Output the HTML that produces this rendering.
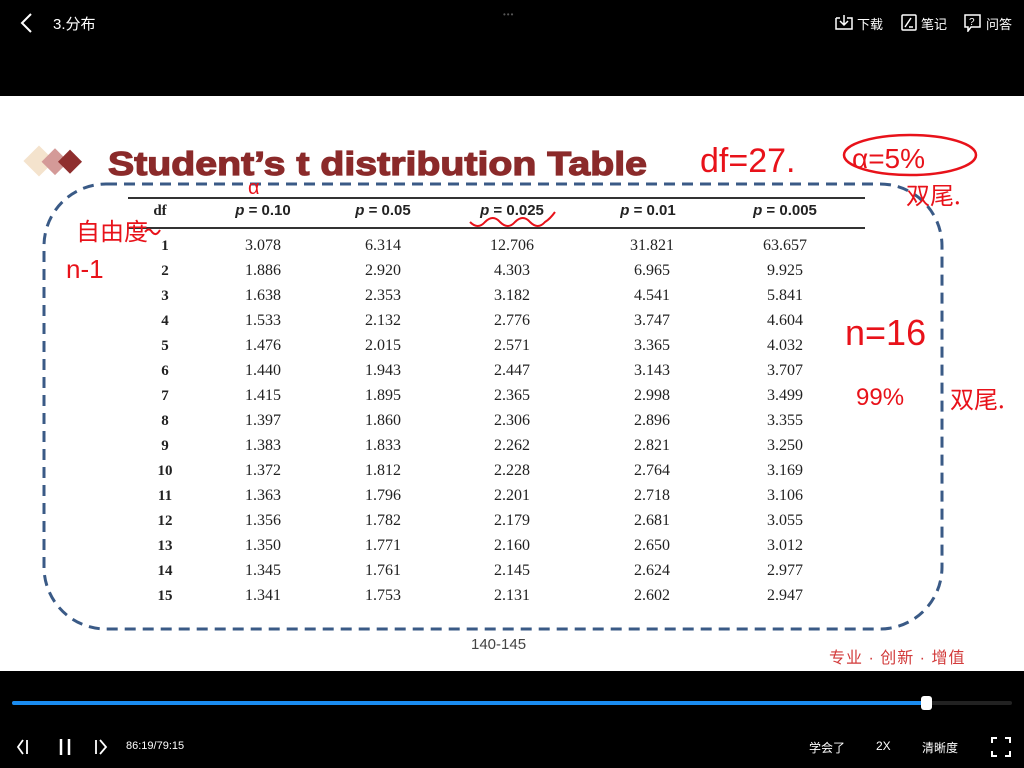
<!DOCTYPE html>
<html><head><meta charset="utf-8"><style>
body{margin:0;width:1024px;height:768px;background:#000;position:relative;overflow:hidden;font-family:"Liberation Sans","Noto Sans CJK SC",sans-serif}
.abs{position:absolute}
.w{color:#fff}
#slide{position:absolute;left:0;top:96px;width:1024px;height:575px;background:#fff}
.num{position:absolute;font-family:"Liberation Serif",serif;font-size:16px;color:#222;text-align:center;width:80px}
.hd{position:absolute;font-family:"Liberation Sans",sans-serif;font-weight:bold;font-size:15px;color:#222;text-align:center;width:100px;top:202px}
.df{position:absolute;font-family:"Liberation Serif",serif;font-weight:bold;font-size:15px;color:#222;width:30px;text-align:center;left:150px}
.red{position:absolute;color:#e8121a;font-family:"Noto Sans CJK SC",sans-serif}
</style></head><body>
<svg class="abs" style="left:18px;top:12px" width="16" height="22"><path d="M13 2 L4 11 L13 20" stroke="#fff" stroke-width="2" fill="none"/></svg>
<div class="abs w" style="left:53px;top:13px;font-size:15px">3.分布</div>
<div class="abs" style="left:503px;top:10px;color:#555;font-size:8px;letter-spacing:1px">•••</div>
<svg class="abs" style="left:835px;top:14px" width="18" height="16"><path d="M1 4 H5 M12 4 H17 V15 H1 V4 M9 1 V11 M5 7 L9 11 L13 7" stroke="#fff" stroke-width="1.5" fill="none"/></svg>
<div class="abs w" style="left:857px;top:14px;font-size:13px">下载</div>
<svg class="abs" style="left:901px;top:14px" width="16" height="17"><rect x="1" y="1" width="14" height="15" rx="1" stroke="#fff" stroke-width="1.5" fill="none"/><path d="M4 13 L10 4 M8 13 H12" stroke="#fff" stroke-width="1.5"/></svg>
<div class="abs w" style="left:921px;top:14px;font-size:13px">笔记</div>
<svg class="abs" style="left:964px;top:14px" width="17" height="18"><path d="M1 1 H16 V13 H7 L4 17 V13 H1 Z" stroke="#fff" stroke-width="1.5" fill="none"/><text x="5" y="11" fill="#fff" font-size="10" font-family="Liberation Sans">?</text></svg>
<div class="abs w" style="left:986px;top:14px;font-size:13px">问答</div>

<div id="slide"></div>
<svg class="abs" style="left:0;top:96px" width="1024" height="575">
<g transform="translate(0,-96)">
<rect x="28" y="150" width="22" height="22" fill="#f3e0c8" transform="rotate(45 39 161)" opacity=".9"/>
<rect x="46" y="152" width="19" height="19" fill="#d49a98" transform="rotate(45 55 161)"/>
<rect x="62" y="153" width="17" height="17" fill="#8f2e2e" transform="rotate(45 70 161)"/>
<text x="108" y="175" font-family="Liberation Sans" font-weight="bold" font-size="33" fill="#8b2a2a" textLength="539" lengthAdjust="spacingAndGlyphs" stroke="#8b2a2a" stroke-width="1.2">Student’s t distribution Table</text>
<rect x="44" y="184" width="898" height="445" rx="62" fill="none" stroke="#3a5a86" stroke-width="3" stroke-dasharray="11 7"/>
<line x1="128" y1="198" x2="865" y2="198" stroke="#333" stroke-width="2"/>
<line x1="128" y1="228" x2="865" y2="228" stroke="#333" stroke-width="2"/>
<path d="M470 222 q8 8 15 0 q8 -8 15 0 q8 8 15 0 q8 -8 15 0 q8 8 15 0 q5 -3 10 -10" stroke="#e8121a" stroke-width="2" fill="none"/>
<path d="M145 232 q4 -5 7 0 q4 5 8 -2" stroke="#e8121a" stroke-width="2" fill="none"/>
<ellipse cx="910" cy="155" rx="66" ry="20" fill="none" stroke="#e8121a" stroke-width="2.5"/>
<text x="700" y="172" fill="#e8121a" font-size="34" font-family="Liberation Sans">df=27.</text>
<text x="852" y="168" fill="#e8121a" font-size="28" font-family="Liberation Sans">α=5%</text>
<text x="845" y="345" fill="#e8121a" font-size="36" font-family="Liberation Sans">n=16</text>
<text x="856" y="405" fill="#e8121a" font-size="24" font-family="Liberation Sans">99%</text>
<text x="66" y="278" fill="#e8121a" font-size="26" font-family="Liberation Sans">n-1</text>
<text x="248" y="194" fill="#e8121a" font-size="20" font-family="Liberation Sans">α</text>
</g></svg>
<div class="red" style="left:76px;top:212px;font-size:24px">自由度</div>
<div class="red" style="left:906px;top:176px;font-size:24px">双尾.</div>
<div class="red" style="left:950px;top:380px;font-size:24px">双尾.</div>

<div class="hd" style="left:130px;width:60px"><span style="font-family:'Liberation Serif';">df</span></div>
<div class="hd" style="left:213px"><i>p</i> = 0.10</div>
<div class="hd" style="left:333px"><i>p</i> = 0.05</div>
<div class="hd" style="left:462px"><i>p</i> = 0.025</div>
<div class="hd" style="left:598px"><i>p</i> = 0.01</div>
<div class="hd" style="left:735px"><i>p</i> = 0.005</div>

<div id="rows"></div>
<div class="abs" style="left:471px;top:636px;font-size:15px;color:#444">140-145</div>
<div class="abs" style="left:829px;top:644px;font-size:16px;color:#d23a3a;letter-spacing:1px">专业 · 创新 · 增值</div>

<div class="abs" style="left:12px;top:701px;width:1000px;height:4px;background:#222;border-radius:2px"></div>
<div class="abs" style="left:12px;top:701px;width:915px;height:4px;background:#1a8cf0;border-radius:2px"></div>
<div class="abs" style="left:921px;top:696px;width:11px;height:14px;background:#fff;border-radius:3px"></div>
<svg class="abs" style="left:16px;top:737px" width="100" height="20"><path d="M7 3 L2 10 L7 17 M11 3 V17" stroke="#fff" stroke-width="1.8" fill="none"/><path d="M45 2 V18 M53 2 V18" stroke="#fff" stroke-width="2.5"/><path d="M80 3 V17 M84 3 L90 10 L84 17" stroke="#fff" stroke-width="1.8" fill="none"/></svg>
<div class="abs w" style="left:126px;top:740px;font-size:11px">86:19/79:15</div>
<div class="abs w" style="left:809px;top:739px;font-size:12px">学会了</div>
<div class="abs w" style="left:876px;top:739px;font-size:12px">2X</div>
<div class="abs w" style="left:922px;top:739px;font-size:12px">清晰度</div>
<svg class="abs" style="left:991px;top:737px" width="20" height="20"><path d="M1 6 V1 H6 M14 1 H19 V6 M19 14 V19 H14 M6 19 H1 V14" stroke="#fff" stroke-width="2" fill="none"/></svg>
<script>
var d=[["3.078","6.314","12.706","31.821","63.657"],["1.886","2.920","4.303","6.965","9.925"],["1.638","2.353","3.182","4.541","5.841"],["1.533","2.132","2.776","3.747","4.604"],["1.476","2.015","2.571","3.365","4.032"],["1.440","1.943","2.447","3.143","3.707"],["1.415","1.895","2.365","2.998","3.499"],["1.397","1.860","2.306","2.896","3.355"],["1.383","1.833","2.262","2.821","3.250"],["1.372","1.812","2.228","2.764","3.169"],["1.363","1.796","2.201","2.718","3.106"],["1.356","1.782","2.179","2.681","3.055"],["1.350","1.771","2.160","2.650","3.012"],["1.345","1.761","2.145","2.624","2.977"],["1.341","1.753","2.131","2.602","2.947"]];
var cx=[263,383,512,652,785],h="";
d.forEach(function(r,i){var y=237+i*25;h+='<div class="df" style="top:'+(y+1)+'px">'+(i+1)+'</div>';r.forEach(function(v,j){h+='<div class="num" style="left:'+(cx[j]-40)+'px;top:'+y+'px">'+v+'</div>'})});
document.getElementById("rows").innerHTML=h;
</script>
</body></html>
